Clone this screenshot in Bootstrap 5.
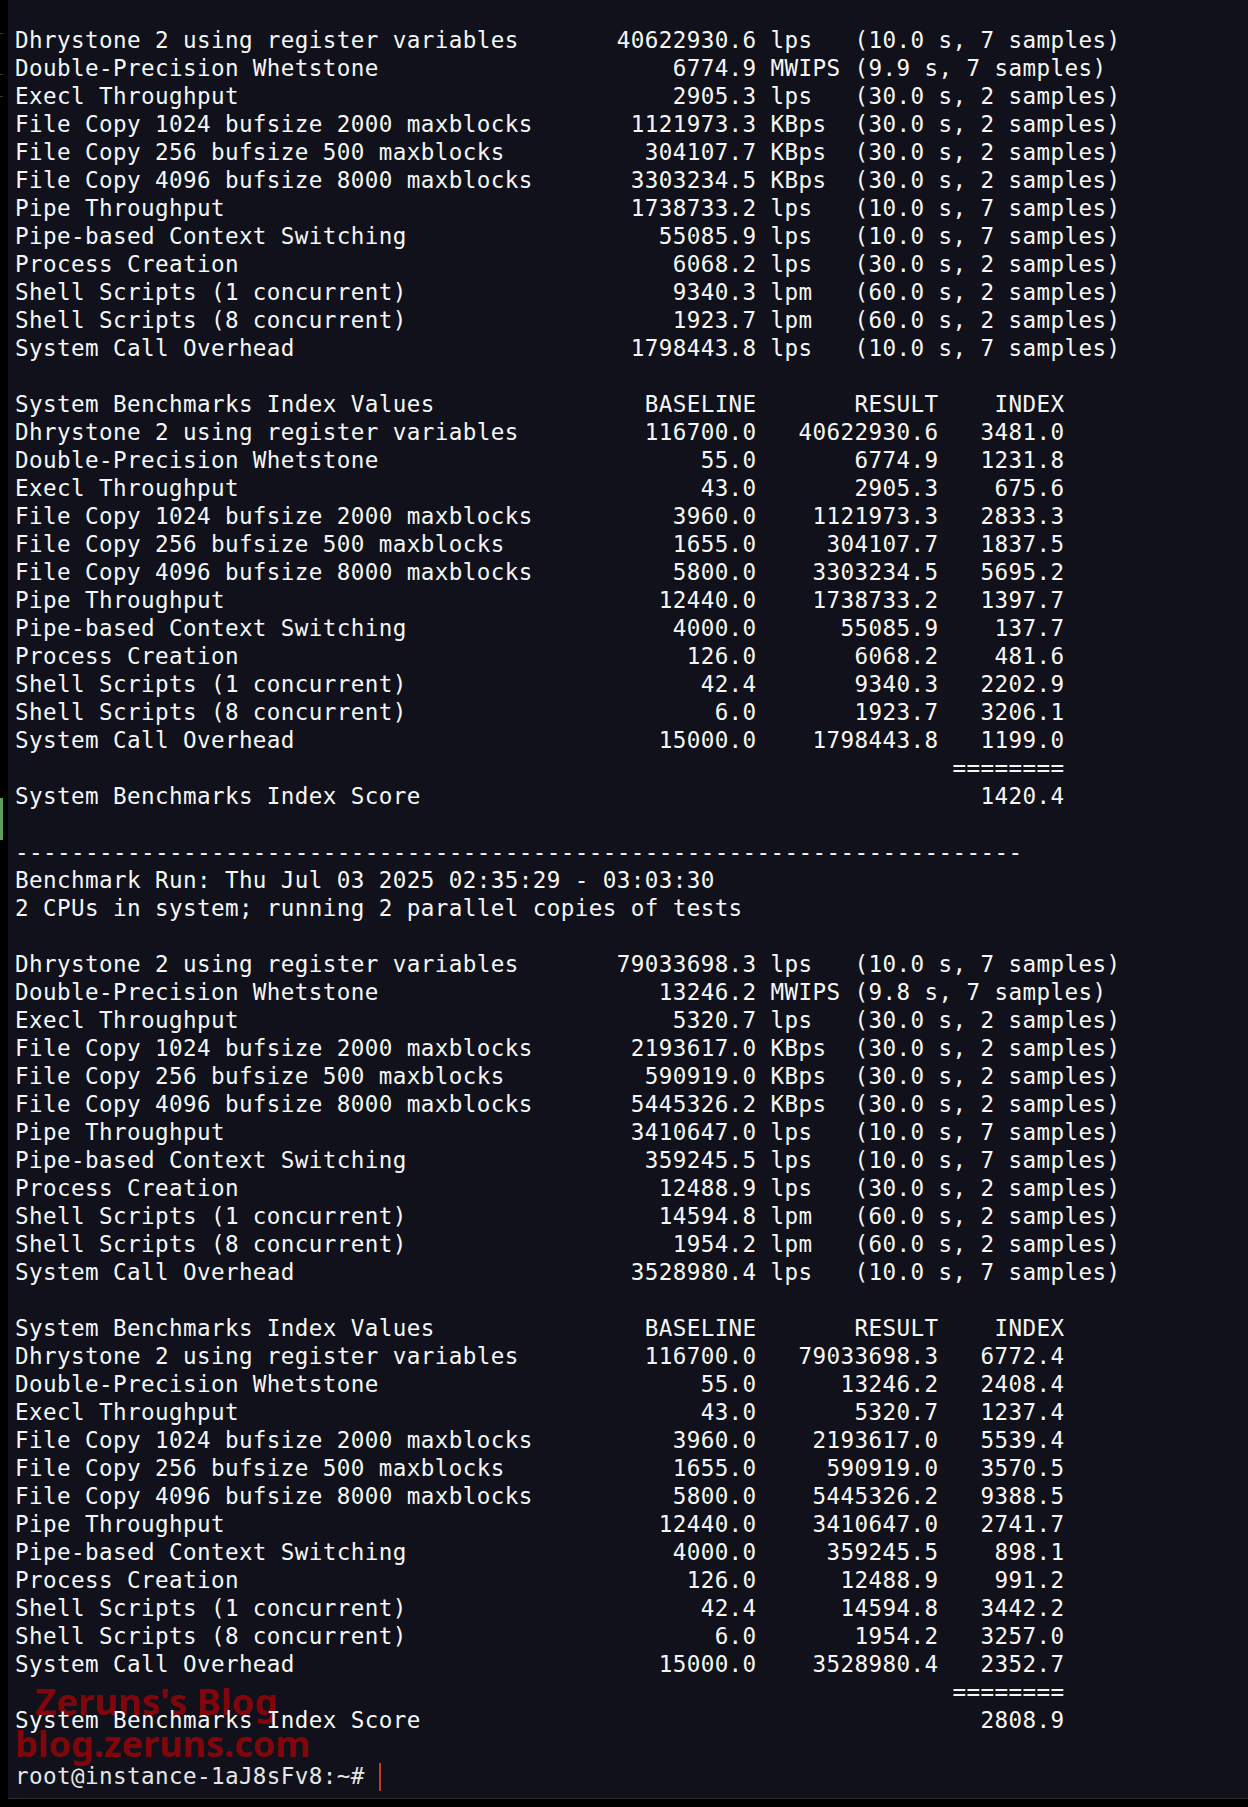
<!DOCTYPE html>
<html lang="en">
<head>
<meta charset="utf-8">
<title>Terminal</title>
<link href="https://cdn.jsdelivr.net/npm/bootstrap@5.3.0/dist/css/bootstrap.min.css" rel="stylesheet">
<style>
html, body { height: 100%; background: #000; }
.term-shell { height: 1807px; overflow: hidden; position: relative; background: #000; }
.term-gutter { width: 8px; flex: 0 0 8px; background: #000; }
.gutter-tick { width: 3px; height: 1px; background: #3a3a3a; }
.gutter-tick-a { margin-top: 33px; }
.gutter-tick-b { margin-top: 40px; }
.gutter-tick-c { margin-top: 21px; }
.gutter-mark { width: 3px; height: 42px; background: #5f9e5c; margin-top: 701px; }
.term-pane { flex: 1 1 auto; height: 1799px; background: #10111a; padding: 26px 0 0 7px; border-bottom: 1px solid #2b2c30; }
.term-text { margin: 0; color: #f6f6f6; font-family: "DejaVu Sans Mono", "Liberation Mono", monospace; font-size: 22.6px; letter-spacing: .39px; line-height: 28px; overflow: visible; position: relative; z-index: 1; }
.term-prompt { color: #e6e6e6; }
.term-cursor { display: inline-block; width: 2px; height: 28px; background: #c0392b; vertical-align: -7px; margin-left: 14px; }
.water-mark { position: absolute; color: #80060c; font-family: "Noto Sans", "Open Sans", sans-serif; font-weight: 700; line-height: 1; }
.water-one { left: 35px; top: 1683px; font-size: 36.5px; }
.water-two { left: 15px; top: 1726px; font-size: 36px; }
</style>
</head>
<body>
<div class="term-shell d-flex">
<div class="term-gutter d-flex flex-column">
<div class="gutter-tick gutter-tick-a"></div>
<div class="gutter-tick gutter-tick-b"></div>
<div class="gutter-tick gutter-tick-c"></div>
<div class="gutter-mark"></div>
</div>
<div class="term-pane">
<pre class="term-text">Dhrystone 2 using register variables       40622930.6 lps   (10.0 s, 7 samples)
Double-Precision Whetstone                     6774.9 MWIPS (9.9 s, 7 samples)
Execl Throughput                               2905.3 lps   (30.0 s, 2 samples)
File Copy 1024 bufsize 2000 maxblocks       1121973.3 KBps  (30.0 s, 2 samples)
File Copy 256 bufsize 500 maxblocks          304107.7 KBps  (30.0 s, 2 samples)
File Copy 4096 bufsize 8000 maxblocks       3303234.5 KBps  (30.0 s, 2 samples)
Pipe Throughput                             1738733.2 lps   (10.0 s, 7 samples)
Pipe-based Context Switching                  55085.9 lps   (10.0 s, 7 samples)
Process Creation                               6068.2 lps   (30.0 s, 2 samples)
Shell Scripts (1 concurrent)                   9340.3 lpm   (60.0 s, 2 samples)
Shell Scripts (8 concurrent)                   1923.7 lpm   (60.0 s, 2 samples)
System Call Overhead                        1798443.8 lps   (10.0 s, 7 samples)

System Benchmarks Index Values               BASELINE       RESULT    INDEX
Dhrystone 2 using register variables         116700.0   40622930.6   3481.0
Double-Precision Whetstone                       55.0       6774.9   1231.8
Execl Throughput                                 43.0       2905.3    675.6
File Copy 1024 bufsize 2000 maxblocks          3960.0    1121973.3   2833.3
File Copy 256 bufsize 500 maxblocks            1655.0     304107.7   1837.5
File Copy 4096 bufsize 8000 maxblocks          5800.0    3303234.5   5695.2
Pipe Throughput                               12440.0    1738733.2   1397.7
Pipe-based Context Switching                   4000.0      55085.9    137.7
Process Creation                                126.0       6068.2    481.6
Shell Scripts (1 concurrent)                     42.4       9340.3   2202.9
Shell Scripts (8 concurrent)                      6.0       1923.7   3206.1
System Call Overhead                          15000.0    1798443.8   1199.0
                                                                   ========
System Benchmarks Index Score                                        1420.4

------------------------------------------------------------------------
Benchmark Run: Thu Jul 03 2025 02:35:29 - 03:03:30
2 CPUs in system; running 2 parallel copies of tests

Dhrystone 2 using register variables       79033698.3 lps   (10.0 s, 7 samples)
Double-Precision Whetstone                    13246.2 MWIPS (9.8 s, 7 samples)
Execl Throughput                               5320.7 lps   (30.0 s, 2 samples)
File Copy 1024 bufsize 2000 maxblocks       2193617.0 KBps  (30.0 s, 2 samples)
File Copy 256 bufsize 500 maxblocks          590919.0 KBps  (30.0 s, 2 samples)
File Copy 4096 bufsize 8000 maxblocks       5445326.2 KBps  (30.0 s, 2 samples)
Pipe Throughput                             3410647.0 lps   (10.0 s, 7 samples)
Pipe-based Context Switching                 359245.5 lps   (10.0 s, 7 samples)
Process Creation                              12488.9 lps   (30.0 s, 2 samples)
Shell Scripts (1 concurrent)                  14594.8 lpm   (60.0 s, 2 samples)
Shell Scripts (8 concurrent)                   1954.2 lpm   (60.0 s, 2 samples)
System Call Overhead                        3528980.4 lps   (10.0 s, 7 samples)

System Benchmarks Index Values               BASELINE       RESULT    INDEX
Dhrystone 2 using register variables         116700.0   79033698.3   6772.4
Double-Precision Whetstone                       55.0      13246.2   2408.4
Execl Throughput                                 43.0       5320.7   1237.4
File Copy 1024 bufsize 2000 maxblocks          3960.0    2193617.0   5539.4
File Copy 256 bufsize 500 maxblocks            1655.0     590919.0   3570.5
File Copy 4096 bufsize 8000 maxblocks          5800.0    5445326.2   9388.5
Pipe Throughput                               12440.0    3410647.0   2741.7
Pipe-based Context Switching                   4000.0     359245.5    898.1
Process Creation                                126.0      12488.9    991.2
Shell Scripts (1 concurrent)                     42.4      14594.8   3442.2
Shell Scripts (8 concurrent)                      6.0       1954.2   3257.0
System Call Overhead                          15000.0    3528980.4   2352.7
                                                                   ========
System Benchmarks Index Score                                        2808.9

<span class="term-prompt">root@instance-1aJ8sFv8:~#</span><span class="term-cursor"></span></pre>
</div>
<div class="water-mark water-one">Zeruns's Blog</div>
<div class="water-mark water-two">blog.zeruns.com</div>
</div>
<script src="https://cdn.jsdelivr.net/npm/bootstrap@5.3.0/dist/js/bootstrap.bundle.min.js"></script>
</body>
</html>
